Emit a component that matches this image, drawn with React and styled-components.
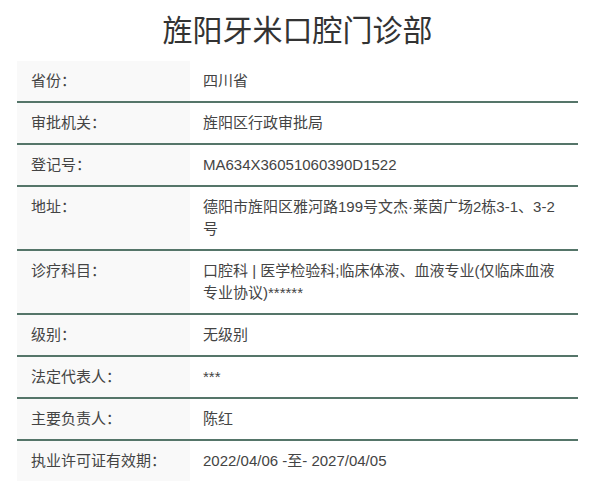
import React from "react";
import styled, { createGlobalStyle } from "styled-components";

const GlobalStyle = createGlobalStyle`
  body {
    margin: 0;
    background: #fff;
    font-family: "Liberation Sans", "Noto Sans CJK SC", sans-serif;
    color: #333;
  }
`;

const Page = styled.div`
  width: 600px;
  padding: 0 22px 0 17px;
  box-sizing: border-box;
`;

const Title = styled.h1`
  margin: 0;
  height: 61px;
  line-height: 56px;
  text-align: center;
  font-family: "Noto Sans CJK SC", sans-serif;
  font-size: 30px;
  font-weight: 400;
  color: #333;
`;

const Table = styled.div`
  display: flex;
  flex-direction: column;
`;

const Row = styled.div`
  display: grid;
  grid-template-columns: 173px 1fr;
  border-top: ${(p) => (p.$first ? "none" : "2px solid #557569")};
`;

const Label = styled.div`
  background: #f9f9f9;
  padding: 9px 14px;
  font-size: 15px;
  line-height: 22px;
  color: #444;
`;

const Value = styled.div`
  background: #fff;
  padding: 9px 22px 9px 13px;
  font-size: 15px;
  line-height: 22px;
  color: #444;
`;

const rows = [
  ["省份：", "四川省"],
  ["审批机关：", "旌阳区行政审批局"],
  ["登记号：", "MA634X36051060390D1522"],
  ["地址：", "德阳市旌阳区雅河路199号文杰·莱茵广场2栋3-1、3-2号"],
  ["诊疗科目：", "口腔科 | 医学检验科;临床体液、血液专业(仅临床血液专业协议)******"],
  ["级别：", "无级别"],
  ["法定代表人：", "***"],
  ["主要负责人：", "陈红"],
  ["执业许可证有效期：", "2022/04/06 -至- 2027/04/05"],
];

export default function App() {
  return (
    <>
      <GlobalStyle />
      <Page>
        <Title>旌阳牙米口腔门诊部</Title>
        <Table>
          {rows.map(([k, v], i) => (
            <Row key={k} $first={i === 0}>
              <Label>{k}</Label>
              <Value>{v}</Value>
            </Row>
          ))}
        </Table>
      </Page>
    </>
  );
}
